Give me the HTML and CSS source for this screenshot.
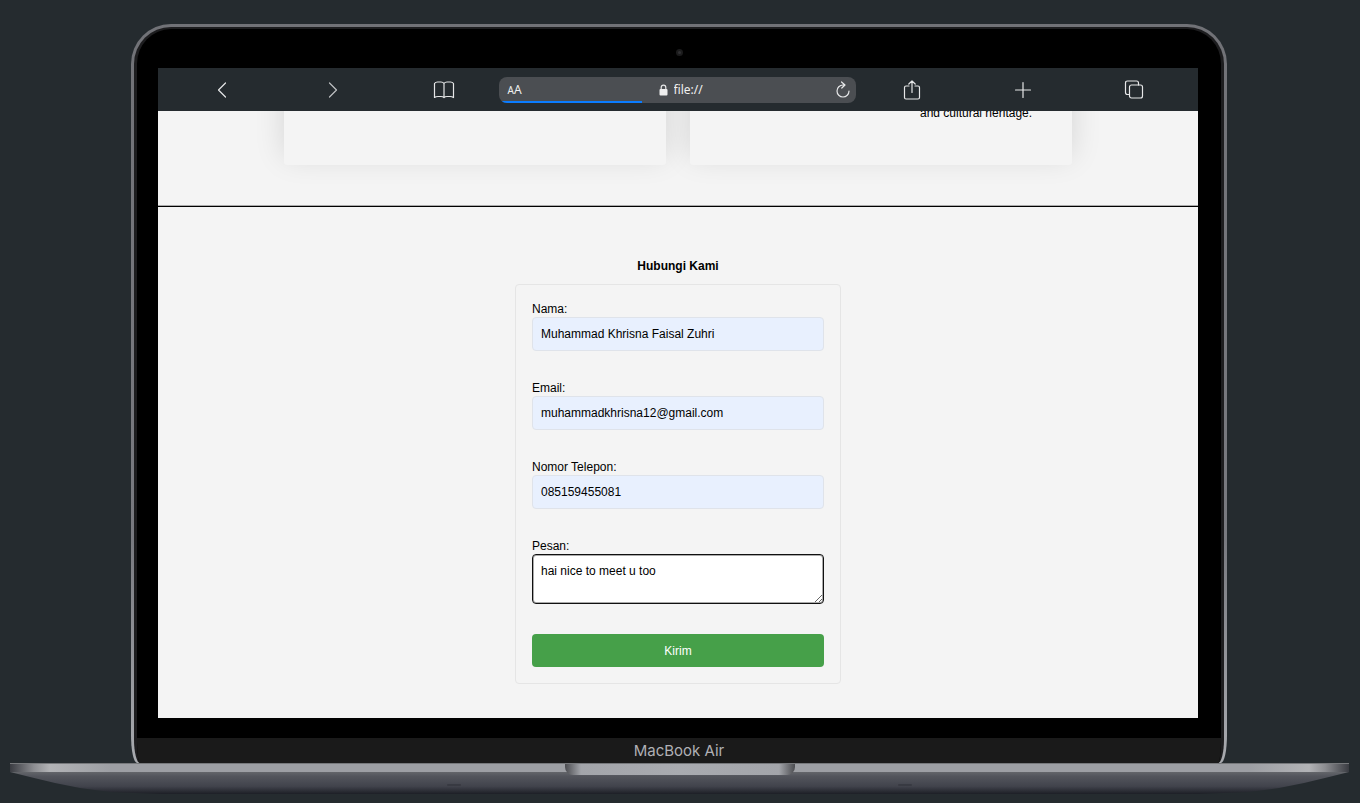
FILE: index.html
```html
<!DOCTYPE html>
<html lang="id">
<head>
<meta charset="utf-8">
<meta name="viewport" content="width=device-width, initial-scale=1">
<title>Hubungi Kami</title>
<link rel="stylesheet" href="styles.css">
</head>
<body>
<div class="laptop">
  <div class="lid">
    <div class="bezel">
      <div class="camera-row"><span class="camera"></span></div>
      <div class="screen">
        <nav class="toolbar" aria-label="Browser">
          <button class="tool" type="button" aria-label="Back"><svg width="24" height="24" viewBox="0 0 24 24"><path d="M15.500 5L8.500 12L15.500 19"/></svg></button>
          <button class="tool dim" type="button" aria-label="Forward"><svg width="24" height="24" viewBox="0 0 24 24"><path d="M8.500 5L15.500 12L8.500 19"/></svg></button>
          <button class="tool" type="button" aria-label="Bookmarks"><svg width="24" height="24" viewBox="0 0 24 24"><path d="M12 5.500Q11 4 9 4H5.500Q3.500 4 2.500 5.500V19.500Q4 18.500 6 18.500H9Q11 18.500 12 19.500Q13 18.500 15 18.500H18Q20 18.500 21.500 19.500V5.500Q20.500 4 18.500 4H15Q13 4 12 5.500V19.500"/></svg></button>
          <div class="address">
            <button class="text-size" type="button" aria-label="Text size"><small>A</small>A</button>
            <label class="location">
              <svg width="9" height="12" viewBox="0 0 9 12" aria-hidden="true"><path class="shackle" d="M2.200 6V3.500C2.200 .3 6.800 .3 6.800 3.500V6"/><rect x=".5" y="5" width="8" height="6.500" rx="1"/></svg>
              <input class="url" type="text" value="file://" aria-label="Address">
            </label>
            <button class="reload" type="button" aria-label="Reload"><svg width="16" height="18" viewBox="0 0 16 18"><path d="M8 4A6 6 0 1 0 14 10M8 4H9.500M6.500 1L10 4L6.800 7"/></svg></button>
            <span class="progress"></span>
          </div>
          <button class="tool" type="button" aria-label="Share"><svg width="24" height="24" viewBox="0 0 24 24"><path d="M9 8H6Q4.500 8 4.500 9.500V19.500Q4.500 21 6 21H18Q19.500 21 19.500 19.500V9.500Q19.500 8 18 8H15M12 14.500V3M8.800 6L12 2.800L15.200 6"/></svg></button>
          <button class="tool" type="button" aria-label="New tab"><svg width="24" height="24" viewBox="0 0 24 24"><path d="M12 4.500V19.500M4.500 12H19.500"/></svg></button>
          <button class="tool" type="button" aria-label="Tabs"><svg width="24" height="24" viewBox="0 0 24 24"><rect x="7.500" y="7" width="13" height="13" rx="2"/><path d="M7.500 16.500H5.500Q3.500 16.500 3.500 14.500V5Q3.500 3 5.500 3H14.500Q16.500 3 16.500 5V7"/></svg></button>
        </nav>
        <main class="page">
          <section class="cards">
            <article class="card"></article>
            <article class="card"><p class="card-text">and cultural heritage.</p></article>
          </section>
          <section class="contact">
            <h2 class="title">Hubungi Kami</h2>
            <form class="form">
              <div class="field"><label for="nama">Nama:</label><input id="nama" type="text" value="Muhammad Khrisna Faisal Zuhri"></div>
              <div class="field"><label for="email">Email:</label><input id="email" type="email" value="muhammadkhrisna12@gmail.com"></div>
              <div class="field"><label for="telepon">Nomor Telepon:</label><input id="telepon" type="tel" value="085159455081"></div>
              <div class="field"><label for="pesan">Pesan:</label><textarea id="pesan">hai nice to meet u too</textarea></div>
              <button class="submit" type="submit">Kirim</button>
            </form>
          </section>
        </main>
      </div>
      <div class="chin">MacBook Air</div>
    </div>
  </div>
  <div class="base">
    <div class="deck"><span class="notch"></span></div>
    <div class="underside"><span class="foot"></span><span class="foot"></span></div>
  </div>
</div>
</body>
</html>
```
FILE: styles.css
```css
* { box-sizing: border-box; }
body {
  margin: 0;
  padding: 24px 11px 8px 10px;
  background: #252b2f;
  font-family: "Liberation Sans", Arial, sans-serif;
  font-size: 12px;
  color: #000;
}
button { border: 0; padding: 0; background: none; color: inherit; font: inherit; }
svg { display: block; fill: none; stroke: #e6e7e8; stroke-width: 1.2; stroke-linecap: round; stroke-linejoin: round; }

/* Laptop lid */
.lid {
  margin: 0 122px 0 121px;
  padding: 3px 3px 0;
  border-radius: 40px 40px 6px 6px / 40px 40px 28px 28px;
  background: linear-gradient(#717277, #797a80 70%, #a9abb0);
}
.bezel {
  overflow: hidden;
  border: solid #1d1d1f;
  border-width: 2px 3px 0;
  border-radius: 37px 37px 6px 6px / 37px 37px 24px 24px;
  background: #000;
}
.camera-row { display: flex; justify-content: center; padding: 20px 0 12px; }
.camera { width: 7px; height: 7px; border: 2px solid #1b1b1c; border-radius: 50%; background: #303033; }
.screen { margin: 0 23px 20px 21px; background: #f4f4f4; }
.chin {
  background: #1a1a1a;
  color: #b0b0b5;
  font-family: Inter, "Liberation Sans", sans-serif;
  font-size: 15px;
  line-height: 25px;
  text-align: center;
}

/* Browser toolbar */
.toolbar {
  display: grid;
  grid-template-columns: repeat(3, 1fr) minmax(200px, 357px) repeat(3, 1fr);
  align-items: center;
  height: 43px;
  padding: 0 8px;
  background: #252b2f;
}
.tool { display: flex; justify-content: center; }
.dim { opacity: .8; }
.address {
  position: relative;
  display: flex;
  align-items: center;
  justify-content: space-between;
  height: 26px;
  padding: 0 5px 0 8px;
  overflow: hidden;
  border-radius: 8px;
  background: #4b4e52;
  color: #f0f0f0;
  font-family: "Noto Sans", "Open Sans", sans-serif;
}
.text-size small { font-size: 10px; }
.location { display: flex; align-items: center; gap: 6px; padding-left: 7px; }
.location rect { fill: #eee; stroke: none; }
.url { width: 32px; border: 0; padding: 0; background: none; color: inherit; font: inherit; }
.progress { position: absolute; left: 0; bottom: 0; width: 40%; height: 2px; background: #0a7cff; }

/* Page inside the browser */
.page { overflow: hidden; padding-bottom: 34px; }
.cards {
  position: relative;
  z-index: 0;
  display: grid;
  grid-template-columns: 1fr 1fr;
  gap: 24px;
  margin-top: -106px;
  padding: 0 126px 40px;
  border-bottom: 1px solid #aaa;
}
.card { position: relative; height: 160px; padding: 100px 16px 0 230px; border-radius: 4px; background: #f4f4f4; }
.card::before {
  content: "";
  position: absolute;
  inset: 0;
  z-index: -1;
  border-radius: 4px;
  box-shadow: 0 -8px 30px rgba(0, 0, 0, .13);
}
.card-text { margin: 0; line-height: 16px; }
.contact { padding-top: 50px; border-top: 1px solid #000; }
.title { margin: 0 0 9px; font-size: 12px; line-height: 18px; text-align: center; }
.form {
  display: flex;
  flex-direction: column;
  gap: 29px;
  width: 326px;
  margin: 0 auto;
  padding: 16px;
  border: 1px solid #e5e5e5;
  border-radius: 4px;
}
.field { display: flex; flex-direction: column; }
.field label { line-height: 16px; }
.field input, .field textarea {
  width: 100%;
  height: 34px;
  padding: 8px;
  border: 1px solid #dfe3ea;
  border-radius: 4px;
  background: #e8f0fe;
  color: #000;
  font: inherit;
  line-height: 16px;
}
.field textarea {
  height: 50px;
  border-color: #101010;
  background: #fff;
  box-shadow: inset 0 0 0 1px #aaa;
  outline: 0;
  resize: vertical;
}
.submit { height: 33px; margin-top: 1px; border-radius: 4px; background: #46a049; color: #fff; }

/* Laptop base */
.deck {
  display: flex;
  justify-content: center;
  height: 9px;
  border-top: 1px solid #77797c;
  background: linear-gradient(90deg, #3a3c42, #8d8e92 24px, #b2b3b6 40px, #9d9fa4 100px, #9d9fa4 calc(100% - 100px), #b2b3b6 calc(100% - 40px), #8d8e92 calc(100% - 24px), #3a3c42);
}
.notch {
  position: relative;
  z-index: 1;
  width: 230px;
  height: 11px;
  border-radius: 0 0 8px 8px;
  background: linear-gradient(90deg, #4b4c50, #a3a5aa 16px, #a9abb0 50%, #a3a5aa calc(100% - 16px), #4b4c50);
}
.underside {
  display: flex;
  justify-content: space-between;
  align-items: center;
  height: 22px;
  padding: 4px 437px 0;
  clip-path: polygon(0 0, 20px 5px, 45px 11px, 70px 16px, 100px 20px, 150px 100%, calc(100% - 150px) 100%, calc(100% - 100px) 20px, calc(100% - 70px) 16px, calc(100% - 45px) 11px, calc(100% - 20px) 5px, 100% 0);
  background: linear-gradient(#63656a, #53555c 20%, #41434c 65%, #1d1f26);
}
.foot { width: 14px; height: 2px; border-radius: 1px; background: #383a42; }
```
